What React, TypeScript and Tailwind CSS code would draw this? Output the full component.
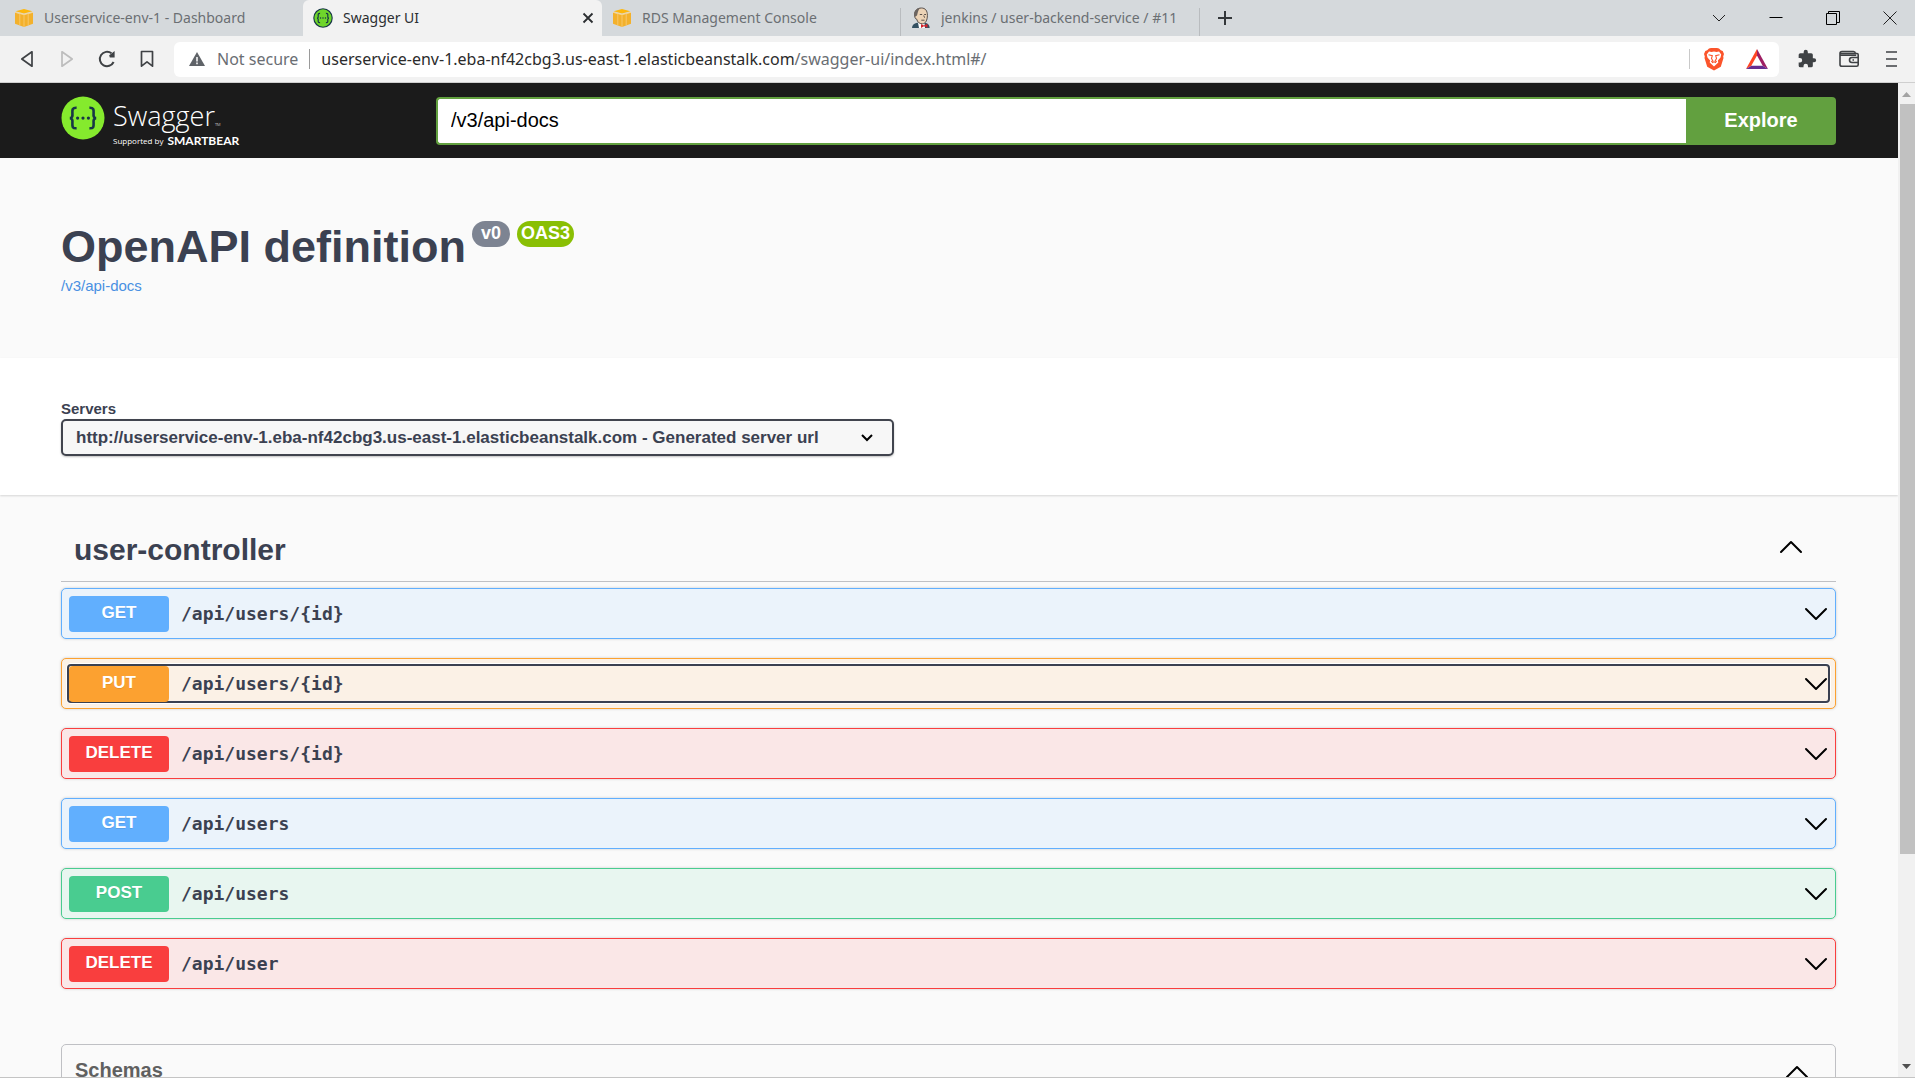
import React from "react";

type Method = "GET" | "PUT" | "DELETE" | "POST";

const methodStyles: Record<Method, { row: string; badge: string }> = {
  GET: { row: "border-[#61affe] bg-[#ebf3fb]", badge: "bg-[#61affe]" },
  PUT: { row: "border-[#fca130] bg-[#fbf1e6]", badge: "bg-[#fca130]" },
  DELETE: { row: "border-[#f93e3e] bg-[#fae7e7]", badge: "bg-[#f93e3e]" },
  POST: { row: "border-[#49cc90] bg-[#e8f6f0]", badge: "bg-[#49cc90]" },
};

const operations: { method: Method; path: string; focused?: boolean }[] = [
  { method: "GET", path: "/api/users/{id}" },
  { method: "PUT", path: "/api/users/{id}", focused: true },
  { method: "DELETE", path: "/api/users/{id}" },
  { method: "GET", path: "/api/users" },
  { method: "POST", path: "/api/users" },
  { method: "DELETE", path: "/api/user" },
];

function AwsIcon() {
  return (
    <svg viewBox="0 0 20 20" className="size-5 shrink-0" aria-hidden="true">
      <path d="M1 4.600 10 6.800l9-2.200v11.200L10 19l-9-3.200z" fill="#f3b12c" />
      <path d="M1.600 3.300 10 1l8.400 2.300L10 5.600z" fill="#fdb70d" />
      <path d="M1 4.300 10 6.500l9-2.200" fill="none" stroke="#f9d690" strokeWidth="1" />
      <path d="M5.800 5.800v11.400M10 6.800V19M14.200 5.800v11.400" stroke="#f8cd7a" strokeWidth=".8" />
    </svg>
  );
}

function SwaggerMark({ className, rim }: { className: string; rim?: boolean }) {
  return (
    <svg viewBox="0 0 44 44" className={className} aria-hidden="true">
      <circle cx="22" cy="22" r="21.5" fill={rim ? "#173647" : "#85ea2d"} />
      {rim && <circle cx="22" cy="22" r="19" fill="#6fd62b" />}
      <g fill="none" stroke="#173647" strokeWidth="2.6">
        <path d="M15.600 11.800c-4.200-.2-4.400 1.600-4.200 5.200.3 3.400-.2 4.900-2.500 5.100 2.300.2 2.800 1.700 2.500 5.100-.2 3.600 0 5.300 4.200 5.100" />
        <path d="M28.400 11.800c4.200-.2 4.400 1.600 4.200 5.200-.3 3.400.2 4.900 2.500 5.100-2.300.2-2.800 1.700-2.500 5.100.2 3.600 0 5.300-4.200 5.100" />
      </g>
      <g fill="#173647">
        <circle cx="16.600" cy="22.100" r="1.600" />
        <circle cx="22" cy="22.100" r="1.600" />
        <circle cx="27.400" cy="22.100" r="1.600" />
      </g>
    </svg>
  );
}

function JenkinsIcon() {
  return (
    <svg viewBox="0 0 20 22" className="h-[22px] w-5 shrink-0" aria-hidden="true">
      <path d="M1 21c0-2.800 2-4.600 5-5.200h8.500c2.500.8 4 2.400 4.200 5.200z" fill="#335061" />
      <path d="M7 15.500 13.500 16l.5 5H8z" fill="#fff" />
      <path d="M3.800 8C3.400 3.500 6.300 1 10.400 1c4 0 6 2.800 6 7.300 0 4.900-1.900 8.500-5 8.500-3.300 0-5.100-2-5.600-4.500C4.200 12 3.500 10 3.800 8z" fill="#ecd3b6" stroke="#4a423e" strokeWidth=".9" />
      <path d="M3.600 10C1.900 5.500 4.500 1 9.800.9 7 2.300 6.900 5.500 6 8.500z" fill="#6b6460" />
      <path d="M8.800 7.500h2.400M13.200 7.500H15M10.300 13.200h3.200M12.700 8.500l.9 2.200" stroke="#4a423e" strokeWidth=".9" fill="none" />
      <path d="m10 17 3 1.500 3.400-1.700.2 4-3.600-1.500-3 1.700z" fill="#d3232a" />
    </svg>
  );
}

function Chevron({ up }: { up?: boolean }) {
  return (
    <svg viewBox="0 0 24 14" className="h-[14px] w-6 shrink-0" fill="none" stroke="#000" strokeWidth="2" strokeLinecap="round" strokeLinejoin="round" aria-hidden="true">
      <path d={up ? "m2 12 10-10 10 10" : "m2 2 10 10L22 2"} />
    </svg>
  );
}

function Tab({ icon, label, active, divider }: { icon: React.ReactNode; label: string; active?: boolean; divider?: boolean }) {
  return (
    <div
      className={
        "flex w-[299px] items-center rounded-t-md pl-[10px] " +
        (active ? "bg-[#f2f2f2] text-[#2b2e31]" : "text-[#6b6f73]")
      }
    >
      {icon}
      <button type="button" className="ml-[10px] flex-1 truncate text-left text-[14px] leading-5">
        {label}
      </button>
      {active && (
        <button type="button" aria-label="Close tab" className="mr-2">
          <svg viewBox="0 0 12 12" className="size-3" stroke="#2b2e31" strokeWidth="1.800" aria-hidden="true">
            <path d="m1.500 1.500 9 9m0-9-9 9" />
          </svg>
        </button>
      )}
      {divider && <span className="h-7 w-px self-end bg-[#b9bcbf]" />}
    </div>
  );
}

function TabStrip() {
  return (
    <div className="flex h-9 shrink-0 items-stretch bg-[#d5d9dc] pl-1">
      <Tab icon={<AwsIcon />} label="Userservice-env-1 - Dashboard" />
      <Tab icon={<SwaggerMark className="size-5 shrink-0" rim />} label="Swagger UI" active />
      <Tab icon={<AwsIcon />} label="RDS Management Console" divider />
      <Tab icon={<JenkinsIcon />} label="jenkins / user-backend-service / #11" divider />
      <button type="button" aria-label="New tab" className="ml-[17px]">
        <svg viewBox="0 0 16 16" className="size-4" stroke="#33373a" strokeWidth="2" aria-hidden="true">
          <path d="M8 1v14M1 8h14" />
        </svg>
      </button>
      <div className="ml-auto flex items-center gap-[43px] pr-[18px]">
        <button type="button" aria-label="Search tabs">
          <svg viewBox="0 0 14 14" className="size-[14px]" fill="none" stroke="#222" aria-hidden="true">
            <path d="m1 4 6 6 6-6" />
          </svg>
        </button>
        <button type="button" aria-label="Minimize">
          <svg viewBox="0 0 14 14" className="size-[14px]" stroke="#000" aria-hidden="true">
            <path d="M.5 6.500h13" />
          </svg>
        </button>
        <button type="button" aria-label="Restore">
          <svg viewBox="0 0 14 14" className="size-[14px]" fill="none" stroke="#000" aria-hidden="true">
            <path d="M.5 2.500h10v11H.5zM2.500 2.500v-2h11v11h-3" />
          </svg>
        </button>
        <button type="button" aria-label="Close">
          <svg viewBox="0 0 14 14" className="size-[14px]" stroke="#222" aria-hidden="true">
            <path d="m.5.5 13 13m0-13-13 13" />
          </svg>
        </button>
      </div>
    </div>
  );
}

function Toolbar() {
  return (
    <div className="flex h-[47px] shrink-0 items-center border-b border-[#cfcfcf] bg-[#f2f2f2] pr-[14px] pl-[17px]">
      <div className="flex items-center gap-5">
        <button type="button" aria-label="Back">
          <svg viewBox="0 0 20 20" className="size-5" fill="none" stroke="#3f4245" strokeWidth="1.700" strokeLinejoin="round" aria-hidden="true">
            <path d="M15 2.800v14.400L4.800 10z" />
          </svg>
        </button>
        <button type="button" aria-label="Forward">
          <svg viewBox="0 0 20 20" className="size-5" fill="none" stroke="#bdbdbd" strokeWidth="1.700" strokeLinejoin="round" aria-hidden="true">
            <path d="M5 2.800v14.400L15.200 10z" />
          </svg>
        </button>
        <button type="button" aria-label="Reload">
          <svg viewBox="0 0 20 20" className="size-5" fill="none" stroke="#3f4245" strokeWidth="2" aria-hidden="true">
            <path d="M14.500 4.300A7.200 7.200 0 1 0 16.600 13" />
            <path d="M12.200 6.200 17.600 2v6.400h-4.800z" fill="#3f4245" stroke="none" />
          </svg>
        </button>
        <button type="button" aria-label="Bookmark">
          <svg viewBox="0 0 20 20" className="size-5" fill="none" stroke="#3f4245" strokeWidth="1.700" strokeLinejoin="round" aria-hidden="true">
            <path d="M4.500 2.500h11v14.700L10 12.800l-5.500 4.400z" />
          </svg>
        </button>
      </div>
      <div className="ml-[17px] flex h-[35px] flex-1 items-center rounded-md bg-white pr-[10px] pl-[15px] text-[16px] leading-6">
        <svg viewBox="0 0 16 14" className="h-[14px] w-4" aria-hidden="true">
          <path d="M8 0 16 14H0z" fill="#5f6368" />
          <path d="M8 5v4.500M8 10.500v1.700" stroke="#fff" strokeWidth="1.500" />
        </svg>
        <span className="ml-3 text-[#6a6e73]">Not secure</span>
        <span className="mx-[11px] h-5 w-px bg-[#9a9a9a]" />
        <a href="#/" className="text-[#2b2b2b]">
          userservice-env-1.eba-nf42cbg3.us-east-1.elasticbeanstalk.com
          <span className="text-[#6a6e73]">/swagger-ui/index.html#/</span>
        </a>
        <span className="mr-[13px] ml-auto h-5 w-px bg-[#c9c9c9]" />
        <button type="button" aria-label="Brave Shields">
          <svg viewBox="0 0 22 24" className="h-6 w-[22px]" aria-hidden="true">
            <path d="m6 1.500 2-.5h6l2 .5 1.800 1.700 1.900.7L21 7l-.8 2.600.3 1.400-2.700 8.700-6.800 3.800-6.800-3.800L1.500 11l.3-1.400L1 7l1.300-3.100 1.900-.7z" fill="#fb542b" />
            <path d="M11 4.500 8.500 5 6 4.600 3.800 7.400l.7 3 2.600 3-.4 2.100L11 19.500l4.300-4-.4-2.100 2.600-3 .7-3L16 4.600l-2.500.4z" fill="#fff" />
            <path d="m5.500 7.800 3.800.9-.8 2.700 1.300 2.400-1.500 1M16.500 7.800l-3.800.9.8 2.700-1.300 2.400 1.500 1M9 15.800l2-1 2 1" fill="none" stroke="#fb542b" strokeWidth="1.100" />
          </svg>
        </button>
        <button type="button" aria-label="Brave Rewards" className="ml-5">
          <svg viewBox="0 0 24 22" className="h-[22px] w-6" aria-hidden="true">
            <path d="M12 1 1 21l5.300-3.300L12 7.500z" fill="#ff4724" />
            <path d="m12 1 11 20-5.300-3.300L12 7.500z" fill="#9e1f63" />
            <path d="M1 21h22l-5.300-3.300H6.300z" fill="#662d91" />
          </svg>
        </button>
      </div>
      <div className="ml-[18px] flex items-center gap-[22px]">
        <button type="button" aria-label="Extensions">
          <svg viewBox="0 0 24 24" className="size-5" fill="#3f4245" aria-hidden="true">
            <path d="M20.500 11H19V7a2 2 0 0 0-2-2h-4V3.500a2.500 2.500 0 0 0-5 0V5H4a2 2 0 0 0-2 2v3.800h1.500a2.700 2.700 0 0 1 0 5.400H2V20a2 2 0 0 0 2 2h3.800v-1.500a2.700 2.700 0 0 1 5.400 0V22H17a2 2 0 0 0 2-2v-4h1.500a2.500 2.500 0 0 0 0-5z" />
          </svg>
        </button>
        <button type="button" aria-label="Wallet">
          <svg viewBox="0 0 20 20" className="size-5" fill="none" stroke="#3f4245" strokeWidth="1.600" strokeLinejoin="round" aria-hidden="true">
            <path d="M1 4.300C1 3 2 2.500 3 2.500h11.500c1 0 1.800.7 2 2H18c.8 0 1.200.6 1.200 1.300v9.900c0 1-.7 1.600-1.600 1.600H3c-1.200 0-2-.7-2-1.800zM1 4.500h15.500M1.200 6.300h16" />
            <path d="M19 8.500h-6a2.500 2.500 0 0 0 0 5h6M13.500 11h1.500" />
          </svg>
        </button>
        <button type="button" aria-label="Menu">
          <svg viewBox="0 0 20 20" className="size-5" stroke="#3f4245" strokeWidth="1.600" aria-hidden="true">
            <path d="M5 3h11M5 10h11M5 17h11" />
          </svg>
        </button>
      </div>
    </div>
  );
}

function TopBar() {
  return (
    <header className="flex h-[75px] items-center bg-[#1b1b1b] pr-[62px] pl-[61px]">
      <a href="#/" className="flex w-[375px] shrink-0 items-start font-['Open_Sans',sans-serif] text-white">
        <SwaggerMark className="size-11 shrink-0" />
        <span className="ml-2 flex flex-col">
          <span className="flex items-end text-[27px] leading-[39px] font-light">
            Swagger<span className="text-[4px] leading-5">TM</span>
          </span>
          <span className="flex items-center gap-1 text-[8px] leading-[11px]">
            Supported by
            <span className="font-['Lato',sans-serif] text-[12px] font-bold">SMARTBEAR</span>
          </span>
        </span>
      </a>
      <form className="flex h-12 flex-1" onSubmit={(e) => e.preventDefault()}>
        <input
          type="text"
          aria-label="API definition URL"
          defaultValue="/v3/api-docs"
          className="min-w-0 flex-1 rounded-l border-2 border-r-0 border-[#62a03f] bg-white px-[13px] pb-0.5 text-[20px] text-black outline-none"
        />
        <button type="submit" className="w-[150px] rounded-r bg-[#62a03f] pb-0.5 text-[20px] font-bold text-white">
          Explore
        </button>
      </form>
    </header>
  );
}

function OperationRow({ method, path, focused }: { method: Method; path: string; focused?: boolean }) {
  const style = methodStyles[method];
  return (
    <div className={"rounded-[5px] border p-[5px] shadow-[0_0_3px_rgba(0,0,0,0.19)] " + style.row}>
      <button
        type="button"
        className={
          "flex h-[39px] w-full items-center rounded border-2 text-left " +
          (focused ? "border-[#3b4151] shadow-[0_0_0_1px_#fff]" : "border-transparent")
        }
      >
        <span
          className={
            "flex h-9 w-[100px] items-center justify-center rounded pb-0.5 text-[17px] font-bold text-white [text-shadow:0_1px_0_rgba(0,0,0,0.1)] " +
            style.badge
          }
        >
          {method}
        </span>
        <span className="ml-3 flex-1 font-['DejaVu_Sans_Mono',monospace] text-[18px] font-bold">{path}</span>
        <Chevron />
      </button>
    </div>
  );
}

function Scrollbar() {
  return (
    <div className="flex w-[17px] shrink-0 flex-col bg-[#f1f1f1]" aria-hidden="true">
      <svg viewBox="0 0 17 21" className="h-[21px] w-full shrink-0">
        <path d="M4 14 8.500 9l4.500 5z" fill="#a3a3a3" />
      </svg>
      <div className="ml-0.5 h-[750px] bg-[#c1c1c1]" />
      <svg viewBox="0 0 17 21" className="mt-auto h-[21px] w-full shrink-0">
        <path d="M4 8h9l-4.500 5z" fill="#505050" />
      </svg>
    </div>
  );
}

export default function App() {
  return (
    <div className="flex h-screen flex-col overflow-hidden border-b border-[#c4c4c4] bg-[#fafafa] font-['Noto_Sans','Open_Sans',sans-serif]">
      <TabStrip />
      <Toolbar />
      <div className="flex min-h-0 flex-1">
        <main className="min-w-0 flex-1 overflow-hidden font-['Liberation_Sans',Arial,sans-serif] text-[#3b4151]">
          <TopBar />
          <section className="h-[200px] pr-[62px] pl-[61px] pt-[62px]">
            <div className="flex items-start">
              <h1 className="text-[45px] leading-[54px] font-bold">OpenAPI definition</h1>
              <span className="mt-px ml-[6px] h-[26px] rounded-full bg-[#7d8492] px-[9px] text-[18px] leading-6 font-bold text-white">v0</span>
              <span className="mt-px ml-[7px] h-[26px] rounded-full bg-[#89bf04] px-1 text-[18px] leading-6 font-bold text-white">OAS3</span>
            </div>
            <a href="#/" className="block text-[15px] leading-6 text-[#4990e2]">/v3/api-docs</a>
          </section>
          <section className="h-[137px] bg-white pr-[62px] pl-[61px] pt-[41px] shadow-[0_1px_2px_rgba(0,0,0,0.15)]">
            <label htmlFor="servers" className="block text-[15px] leading-5 font-bold">Servers</label>
            <div className="relative w-fit">
              <select
                id="servers"
                className="h-[37px] appearance-none rounded-[5px] border-2 border-[#41444e] bg-[#f7f7f7] pr-[73px] pl-[13px] text-[17px] font-bold shadow-[0_1px_2px_rgba(0,0,0,0.25)]"
              >
                <option>http://userservice-env-1.eba-nf42cbg3.us-east-1.elasticbeanstalk.com - Generated server url</option>
              </select>
              <svg viewBox="0 0 12 8" className="pointer-events-none absolute top-[15px] right-[21px] h-2 w-3" fill="none" stroke="#000" strokeWidth="2" aria-hidden="true">
                <path d="m1 1 5 5 5-5" />
              </svg>
            </div>
          </section>
          <section className="pr-[62px] pl-[61px] pt-9">
            <h2 className="mb-[6px] border-b border-[#bfc0c4] pb-[13px]">
              <button type="button" className="flex w-full items-start pr-[33px] pl-[13px] text-left text-[30px] leading-[37px] font-bold">
                <span className="flex-1">user-controller</span>
                <span className="py-[9px] leading-none">
                  <Chevron up />
                </span>
              </button>
            </h2>
            <div className="flex flex-col gap-[19px]">
              {operations.map((op) => (
                <OperationRow key={op.method + op.path} {...op} />
              ))}
            </div>
          </section>
          <section className="mr-[62px] ml-[61px] mt-[55px] rounded-[5px] border border-[#bfc0c4]">
            <h2>
              <button type="button" className="flex w-full items-center px-[13px] pr-[26px] py-3 text-left text-[20px] leading-[26px] font-bold text-[#606060]">
                <span className="flex-1">Schemas</span>
                <span className="pt-1">
                  <Chevron up />
                </span>
              </button>
            </h2>
          </section>
        </main>
        <Scrollbar />
      </div>
    </div>
  );
}
